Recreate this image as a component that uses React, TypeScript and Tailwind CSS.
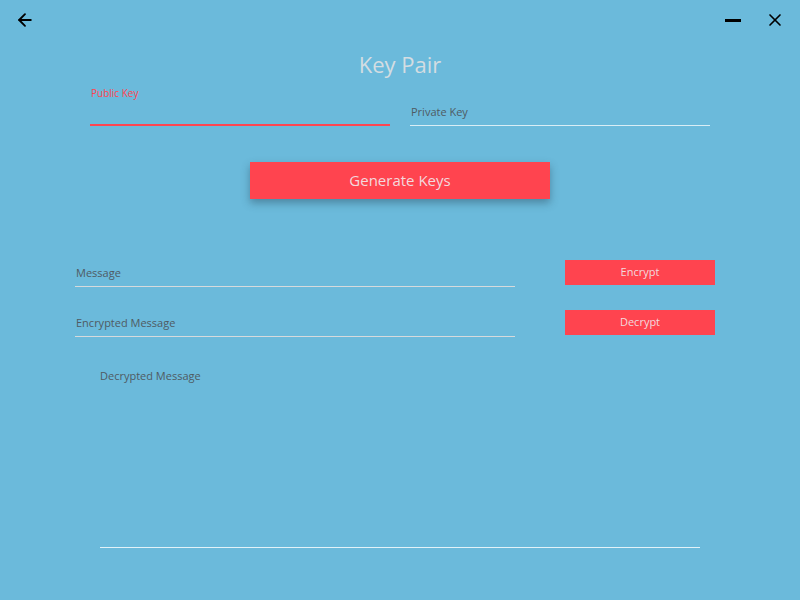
import { ArrowLeft, X } from "lucide-react";

function App() {
  return (
    <div
      className="w-[800px] h-[600px] bg-[#6bbadb] overflow-hidden"
      style={{ fontFamily: '"Open Sans", "Noto Sans", sans-serif' }}
    >
      {/* title bar */}
      <div className="flex h-[40px] items-start justify-between">
        <button className="ml-[15px] mt-[10px] text-black">
          <ArrowLeft size={20} strokeWidth={2.2} />
        </button>
        <div className="flex items-start">
          <div className="mt-[19px] mr-[24px] h-[3px] w-[16px] bg-black" />
          <button className="mr-[15px] mt-[10px] text-black">
            <X size={20} strokeWidth={2} />
          </button>
        </div>
      </div>

      <h1 className="mt-[9px] h-[37px] text-center text-[22px] leading-[30px] text-[#d4dde2]">
        Key Pair
      </h1>

      {/* key fields */}
      <div className="ml-[90px] flex w-[620px] gap-[20px]">
        <div className="flex h-[40px] w-[300px] flex-col border-b-2 border-[#ff4550]">
          <span className="pl-[1px] text-[10px] leading-[14px] text-[#ff4550]">
            Public Key
          </span>
        </div>
        <div className="flex h-[40px] w-[300px] flex-col justify-end border-b border-[#d9edf5] pb-[5px]">
          <span className="pl-[1px] text-[11px] leading-[16px] text-[#4f5a63]">
            Private Key
          </span>
        </div>
      </div>

      <button className="mx-auto mt-[36px] flex h-[37px] w-[300px] items-center justify-center bg-[#ff444f] text-[15px] text-[#f3d9de] shadow-[0_4px_8px_rgba(40,70,90,0.45)]">
        Generate Keys
      </button>

      {/* message rows */}
      <div className="ml-[75px] mt-[61px] flex gap-[50px]">
        <div className="flex h-[27px] w-[440px] flex-col justify-end border-b border-[#d6dadc] pb-[5px]">
          <span className="pl-[1px] text-[11px] leading-[16px] text-[#4f5a63]">Message</span>
        </div>
        <button className="h-[25px] w-[150px] bg-[#ff444f] text-[11px] text-[#f3d9de]">
          Encrypt
        </button>
      </div>

      <div className="ml-[75px] mt-[23px] flex gap-[50px]">
        <div className="flex h-[27px] w-[440px] flex-col justify-end border-b border-[#d6dadc] pb-[5px]">
          <span className="pl-[1px] text-[11px] leading-[16px] text-[#4f5a63]">
            Encrypted Message
          </span>
        </div>
        <button className="h-[25px] w-[150px] bg-[#ff444f] text-[11px] text-[#f3d9de]">
          Decrypt
        </button>
      </div>

      <div className="ml-[100px] mt-[31px] flex h-[180px] w-[600px] flex-col border-b border-[#e2f2f8]">
        <span className="text-[11px] leading-[16px] text-[#4f5a63]">Decrypted Message</span>
      </div>
    </div>
  );
}

export default App;
